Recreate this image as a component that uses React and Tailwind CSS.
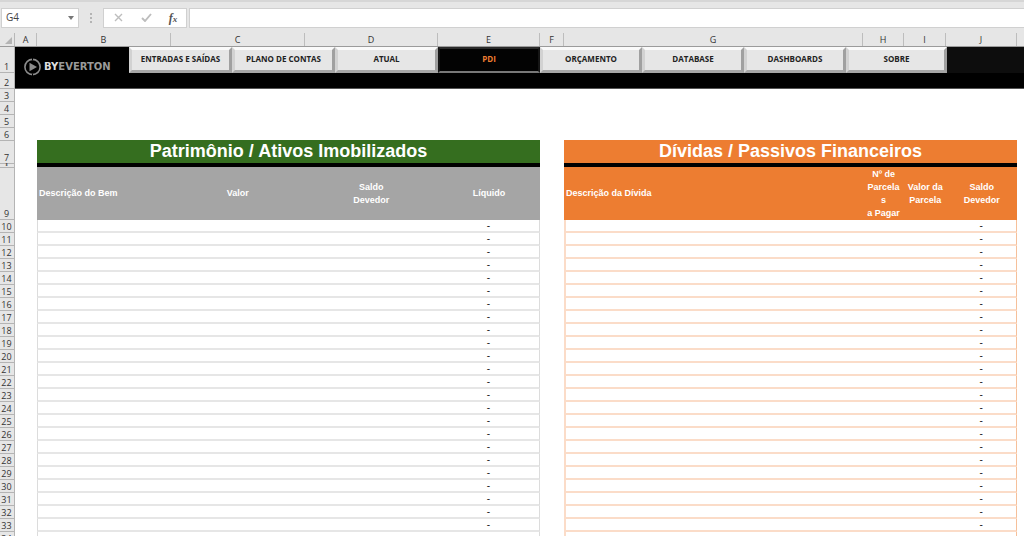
import React, { useState } from "react";

const columns = ["A", "B", "C", "D", "E", "F", "G", "H", "I", "J", ""];

// rows above the data area do not share one height
const topRows = [
  { n: 1, height: "h-[26px]" },
  { n: 2, height: "h-4" },
  { n: 3, height: "h-[13px]" },
  { n: 4, height: "h-[13px]" },
  { n: 5, height: "h-[13px]" },
  { n: 6, height: "h-[13px]" },
  { n: 7, height: "h-[23px]" },
  { n: 8, height: "h-1", text: "text-[3px] leading-[3px] font-bold" },
  { n: 9, height: "h-[52px]" },
];

const dataRows = Array.from({ length: 25 }, (_, i) => i + 10);

const tabs = [
  "ENTRADAS E SAÍDAS",
  "PLANO DE CONTAS",
  "ATUAL",
  "PDI",
  "ORÇAMENTO",
  "DATABASE",
  "DASHBOARDS",
  "SOBRE",
];

const FormulaBar = () => {
  const [formula, setFormula] = useState("");

  return (
    <div className="flex items-center h-[33px] border-t-2 border-[#d6d6d6] text-[#444]">
      <div className="flex items-center w-[78px] h-5 ml-px bg-white border border-[#d0d0d0]">
        <input
          aria-label="Name box"
          defaultValue="G4"
          className="w-[62px] pl-1 text-[10px] bg-transparent outline-none"
        />
        <button aria-label="Open names" className="w-4 flex justify-center">
          <svg className="w-[6px] h-[4px]" viewBox="0 0 6 4">
            <path d="M0 0h6L3 4z" fill="#777" />
          </svg>
        </button>
      </div>
      <svg className="w-6 h-5 shrink-0" viewBox="0 0 24 20">
        <path d="M11 5h2v2h-2zM11 9h2v2h-2zM11 13h2v2h-2z" fill="#b4b4b4" />
      </svg>
      <div className="flex items-center w-[84px] h-5 bg-white border border-[#d0d0d0] shrink-0">
        <button aria-label="Cancel" className="w-7 flex justify-center">
          <svg className="w-[9px] h-[9px]" viewBox="0 0 9 9">
            <path d="M1 1l7 7M8 1L1 8" stroke="#bdbdbd" strokeWidth="1.4" />
          </svg>
        </button>
        <button aria-label="Enter" className="w-7 flex justify-center">
          <svg className="w-[11px] h-[9px]" viewBox="0 0 11 9">
            <path d="M1 5l3 3 6-7" fill="none" stroke="#bdbdbd" strokeWidth="1.9" />
          </svg>
        </button>
        <button
          aria-label="Insert function"
          className="w-[26px] text-[12px] leading-none italic font-bold text-[#555] font-['Liberation_Serif',serif]"
        >
          f<span className="text-[9px]">x</span>
        </button>
      </div>
      <input
        aria-label="Formula"
        value={formula}
        onChange={(e) => setFormula(e.target.value)}
        className="flex-1 min-w-0 h-5 ml-[2px] px-1 text-[10px] bg-white border border-r-0 border-[#d0d0d0] outline-none"
      />
    </div>
  );
};

const ColumnHeaders = () => (
  <div className="grid grid-cols-[15px_22px_134fr_134fr_133fr_102fr_24px_299fr_41fr_42fr_71fr_7px] h-[14px] border-b border-[#9b9b9b] text-[9px] leading-[13px] text-center text-[#333]">
    <div className="flex items-end justify-end p-[2px] border-r border-[#b8b8b8]">
      <svg className="w-[7px] h-[7px]" viewBox="0 0 7 7">
        <path d="M7 0v7H0z" fill="#b4b4b4" />
      </svg>
    </div>
    {columns.map((col, i) => (
      <div key={i} className="border-r border-[#bdbdbd] last:border-r-0">
        {col}
      </div>
    ))}
  </div>
);

const RowHeader = ({ n, height, text = "text-[9px] leading-[11px]" }) => (
  <div
    className={`${height} ${text} flex items-end justify-center pr-px border-b border-r border-[#b4b4b4] text-[#333] shrink-0`}
  >
    {n}
  </div>
);

const Logo = () => (
  <div className="flex items-center w-[114px] pl-2 pt-[14px] shrink-0">
    <svg className="w-[19px] h-[18px] shrink-0" viewBox="0 0 19 18">
      <circle cx="9.5" cy="9" r="7.6" fill="none" stroke="#8c8c8c" strokeWidth="1.6" />
      <path d="M6.5 4.8L14 9l-7.5 4.2z" fill="#8c8c8c" />
      <path d="M9.5 0v2.4M9.5 15.6V18" stroke="#000" strokeWidth="1" />
    </svg>
    <span className="ml-[2px] text-[10px] leading-none font-bold text-[#9a9a9a] font-['DejaVu_Sans',sans-serif]">
      <span className="text-[#dedede]">BY</span>EVERTON
    </span>
  </div>
);

const NavBar = () => {
  const [active, setActive] = useState("PDI");

  return (
    <div className="h-[42px] bg-black border-b border-[#555]">
      <div className="flex h-[26px]">
        <Logo />
        <nav className="flex-[818] grid grid-cols-[103fr_103fr_103fr_102fr_102fr_102fr_102fr_101fr] min-w-0">
          {tabs.map((tab) => (
            <button
              key={tab}
              onClick={() => setActive(tab)}
              className={
                tab === active
                  ? "pb-[2px] bg-[#030303] border-2 border-t-[#2a2a2a] border-x-[#161616] border-b-[#777] text-[#ed7d31] text-[8px] font-bold whitespace-nowrap"
                  : "pb-[2px] bg-[#e6e6e6] border-[3px] border-t-[#fafafa] border-l-[#d2d2d2] border-r-[#a0a0a0] border-b-[#a6a6a6] text-[#222] text-[8px] font-bold whitespace-nowrap"
              }
            >
              {tab}
            </button>
          ))}
        </nav>
        <div className="flex-[77] bg-[#0d0d0d]" />
      </div>
    </div>
  );
};

const AssetsTable = () => (
  <table className="w-full table-fixed border-separate border-spacing-0 font-['Liberation_Sans',sans-serif]">
    <colgroup>
      <col className="w-[26.6%]" />
      <col className="w-[26.6%]" />
      <col className="w-[26.5%]" />
      <col />
    </colgroup>
    <thead className="text-white">
      <tr className="h-[27px]">
        <th
          colSpan={4}
          className="p-0 bg-[#356e1f] border-b-4 border-black text-[18px] leading-[23px]"
        >
          Patrimônio / Ativos Imobilizados
        </th>
      </tr>
      <tr className="h-[53px] bg-[#a5a5a5] text-[9px] leading-[13px]">
        <th className="p-0 pl-[2px] text-left">Descrição do Bem</th>
        <th className="p-0">Valor</th>
        <th className="p-0">
          Saldo
          <br />
          Devedor
        </th>
        <th className="p-0">Líquido</th>
      </tr>
    </thead>
    <tbody className="text-[10px] leading-[11px] text-center text-[#222]">
      {dataRows.map((n) => (
        <tr key={n} className="h-[13px]">
          <td colSpan={3} className="p-0 border-b-2 border-l border-b-[#e6e6e6] border-l-[#dcdcdc]" />
          <td className="p-0 border-b-2 border-r border-b-[#e6e6e6] border-r-[#dcdcdc]">-</td>
        </tr>
      ))}
    </tbody>
  </table>
);

const DebtsTable = () => (
  <table className="w-full table-fixed border-separate border-spacing-0 font-['Liberation_Sans',sans-serif]">
    <colgroup>
      <col />
      <col className="w-[9.1%]" />
      <col className="w-[9.3%]" />
      <col className="w-[15.6%]" />
    </colgroup>
    <thead className="text-white">
      <tr className="h-[27px]">
        <th
          colSpan={4}
          className="p-0 bg-[#ed7d31] border-b-4 border-black text-[18px] leading-[23px]"
        >
          Dívidas / Passivos Financeiros
        </th>
      </tr>
      <tr className="h-[53px] bg-[#ed7d31] text-[9px] leading-[13px]">
        <th className="p-0 pl-[2px] text-left">Descrição da Dívida</th>
        <th className="p-0 whitespace-nowrap">
          Nº de
          <br />
          Parcela
          <br />
          s
          <br />
          a Pagar
        </th>
        <th className="p-0 whitespace-nowrap">
          Valor da
          <br />
          Parcela
        </th>
        <th className="p-0">
          Saldo
          <br />
          Devedor
        </th>
      </tr>
    </thead>
    <tbody className="text-[10px] leading-[11px] text-center text-[#222]">
      {dataRows.map((n) => (
        <tr key={n} className="h-[13px]">
          <td colSpan={3} className="p-0 border-b-2 border-l-2 border-[#fbdcc8]" />
          <td className="p-0 border-b-2 border-r border-b-[#fbdcc8] border-r-[#f6c09a]">-</td>
        </tr>
      ))}
    </tbody>
  </table>
);

const App = () => {
  return (
    <div className="h-screen flex flex-col overflow-hidden bg-[#e6e6e6] font-['Open_Sans',sans-serif]">
      <FormulaBar />
      <ColumnHeaders />
      <div className="flex flex-1 min-h-0 overflow-hidden">
        <div className="w-[15px] shrink-0">
          {topRows.map((row) => (
            <RowHeader key={row.n} {...row} />
          ))}
          {dataRows.map((n) => (
            <RowHeader key={n} n={n} height="h-[13px]" />
          ))}
        </div>
        <main className="flex-1 min-w-0 bg-white">
          <NavBar />
          <div className="grid grid-cols-[503fr_453fr] gap-6 pt-[51px] pl-[22px] pr-[7px] items-start">
            <AssetsTable />
            <DebtsTable />
          </div>
        </main>
      </div>
    </div>
  );
};

export default App;
